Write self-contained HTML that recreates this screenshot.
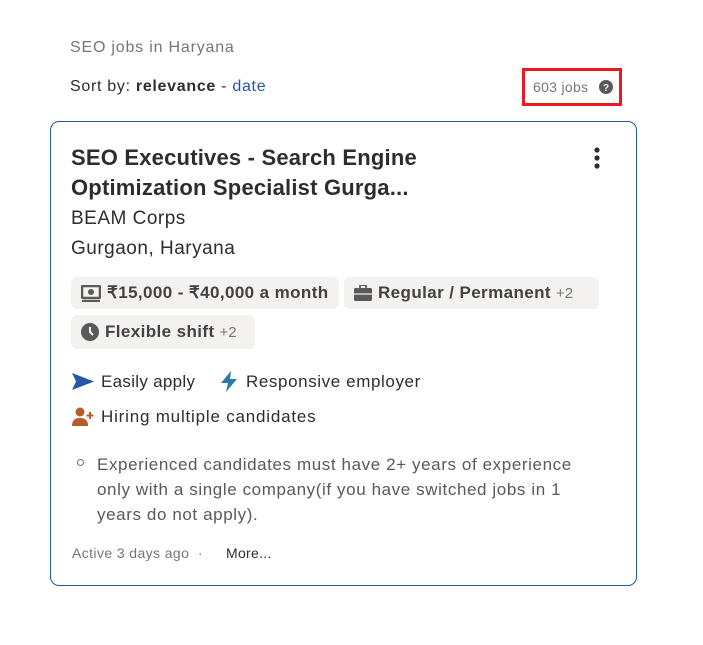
<!DOCTYPE html>
<html><head><meta charset="utf-8"><style>
*{margin:0;padding:0;box-sizing:border-box}
body{width:703px;height:645px;background:#fff;font-family:"Liberation Sans",sans-serif;color:#2d2d2d;position:relative;overflow:hidden}
.abs{position:absolute;white-space:nowrap}
.chip{position:absolute;background:#f3f2f1;border-radius:6px;height:32px;display:flex;align-items:center;padding-left:10px;font-size:17px;font-weight:bold;color:#424242;letter-spacing:0.4px}
.chip svg{margin-right:6px}
.chip span{font-weight:normal;font-size:15px;color:#767676;margin-left:5px;letter-spacing:0}
</style></head><body>
<div class="abs" style="left:70px;top:39px;font-size:16px;color:#767676;letter-spacing:0.8px">SEO jobs in Haryana</div>
<div class="abs" style="left:70px;top:78px;font-size:16px;color:#2d2d2d;letter-spacing:0.7px">Sort by: <b>relevance</b> - <span style="color:#2557a7">date</span></div>
<div class="abs" style="left:522px;top:68px;width:100px;height:38px;border:3px solid #e8191f"></div>
<div class="abs" style="left:533px;top:79px;font-size:14px;color:#767676;letter-spacing:0.3px">603 jobs</div>
<svg class="abs" style="left:599px;top:80px" width="14" height="14" viewBox="0 0 14 14"><circle cx="7" cy="7" r="7" fill="#595959"/><text x="7" y="11" font-size="10" font-weight="bold" fill="#fff" text-anchor="middle" font-family="Liberation Sans">?</text></svg>
<div class="abs" style="left:50px;top:121px;width:587px;height:465px;border:1px solid #2557a7;border-radius:9px"></div>
<svg class="abs" style="left:592px;top:146px" width="10" height="26"><circle cx="5" cy="4" r="2.6" fill="#2d2d2d"/><circle cx="5" cy="12" r="2.6" fill="#2d2d2d"/><circle cx="5" cy="20" r="2.6" fill="#2d2d2d"/></svg>
<div class="abs" style="left:71px;top:143px;font-size:22px;font-weight:bold;line-height:30px;color:#2d2d2d;letter-spacing:0.2px">SEO Executives - Search Engine<br>Optimization Specialist Gurga...</div>
<div class="abs" style="left:71px;top:204px;font-size:19px;line-height:30px;color:#2d2d2d;letter-spacing:0.5px">BEAM Corps<br>Gurgaon, Haryana</div>
<div class="chip" style="left:71px;top:277px;width:268px"><svg width="20" height="17" viewBox="0 0 20 17"><rect x="1" y="1" width="18" height="12" rx="1" fill="none" stroke="#595959" stroke-width="2.5"/><circle cx="10" cy="7" r="3" fill="#595959"/><path d="M1 16h18" stroke="#595959" stroke-width="2"/></svg>₹15,000 - ₹40,000 a month</div>
<div class="chip" style="left:344px;top:277px;width:255px"><svg width="18" height="16" viewBox="0 0 18 16"><rect x="0" y="3" width="18" height="13" rx="1.5" fill="#595959"/><rect x="6" y="0" width="6" height="4" fill="none" stroke="#595959" stroke-width="1.8"/><path d="M0 9h18" stroke="#f3f2f1" stroke-width="1.2"/></svg>Regular / Permanent<span>+2</span></div>
<div class="chip" style="left:71px;top:315px;width:184px;height:34px"><svg width="18" height="18" viewBox="0 0 18 18"><circle cx="9" cy="9" r="9" fill="#595959"/><path d="M9 4v5l3 3" stroke="#f3f2f1" stroke-width="2" fill="none"/></svg>Flexible shift<span>+2</span></div>
<svg class="abs" style="left:72px;top:373px" width="22" height="17" viewBox="0 0 22 17"><path d="M0 0L22 8.5 0 17 4 8.5z" fill="#2557a7"/></svg>
<div class="abs" style="left:101px;top:372px;font-size:17px;letter-spacing:0.3px">Easily apply</div>
<svg class="abs" style="left:220px;top:371px" width="18" height="21" viewBox="0 0 18 21"><path d="M11 0L1 12h7l-2 9L17 8h-7z" fill="#2a7ab0"/></svg>
<div class="abs" style="left:246px;top:372px;font-size:17px;letter-spacing:0.6px">Responsive employer</div>
<svg class="abs" style="left:72px;top:407px" width="22" height="19" viewBox="0 0 22 19"><circle cx="8" cy="5" r="4.5" fill="#b85c2c"/><path d="M0 19c0-6 3-8 8-8s8 2 8 8z" fill="#b85c2c"/><path d="M18 5v7M14.5 8.5h7" stroke="#b85c2c" stroke-width="2"/></svg>
<div class="abs" style="left:101px;top:407px;font-size:17px;letter-spacing:0.8px">Hiring multiple candidates</div>
<div class="abs" style="left:77px;top:459px;width:7px;height:7px;border:1.3px solid #767676;border-radius:50%"></div>
<div class="abs" style="left:97px;top:452px;font-size:17px;line-height:25px;color:#595959;letter-spacing:0.6px">Experienced candidates must have 2+ years of experience<br>only with a single company(if you have switched jobs in 1<br>years do not apply).</div>
<div class="abs" style="left:72px;top:545px;font-size:14px;color:#767676;letter-spacing:0.4px">Active 3 days ago &nbsp;·</div>
<div class="abs" style="left:226px;top:545px;font-size:14px;color:#2d2d2d;letter-spacing:0.3px">More...</div>
</body></html>
